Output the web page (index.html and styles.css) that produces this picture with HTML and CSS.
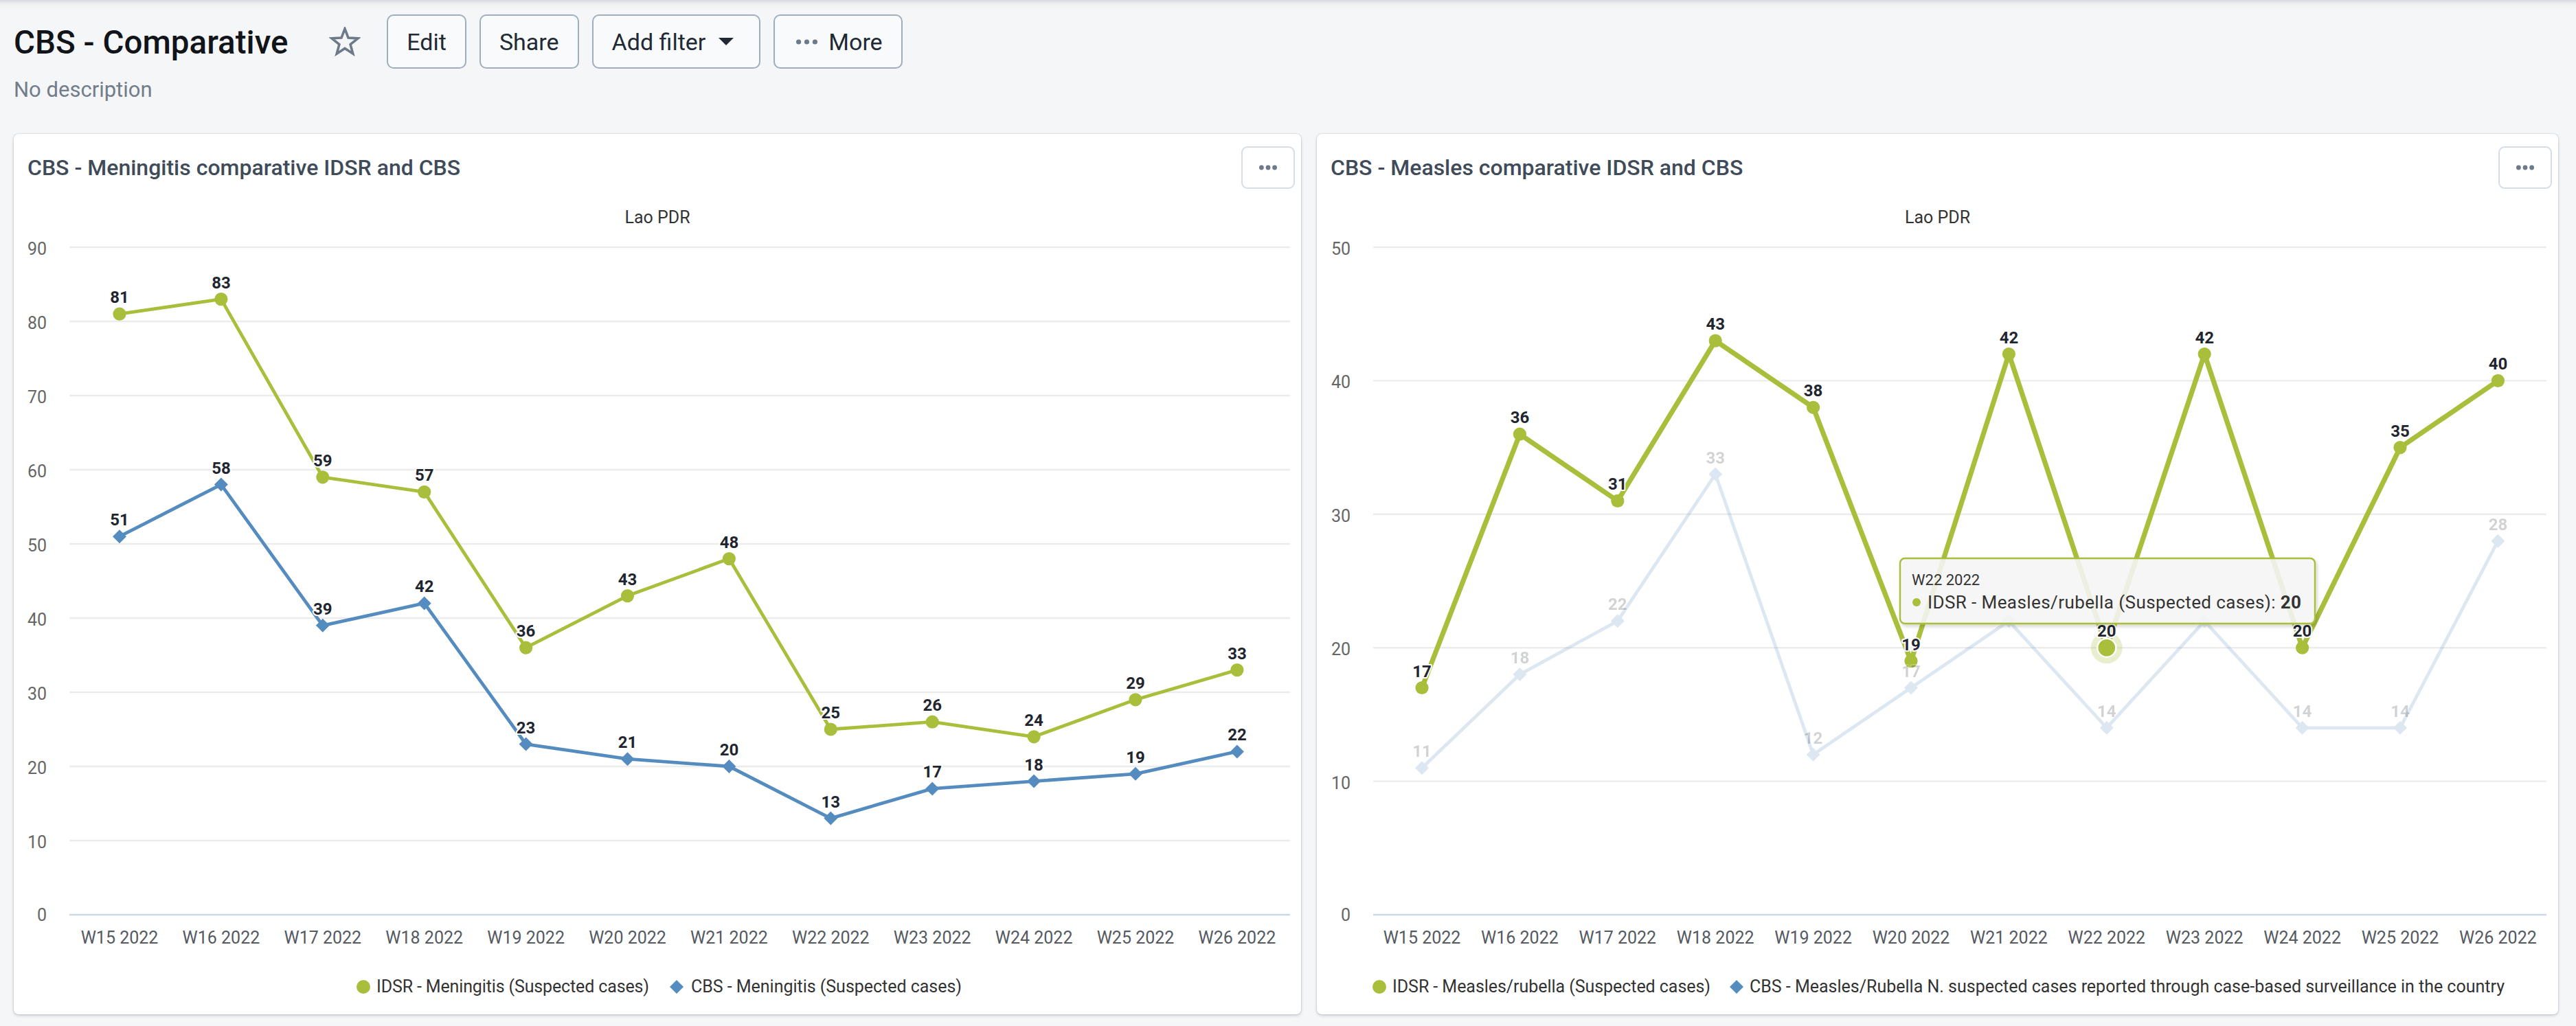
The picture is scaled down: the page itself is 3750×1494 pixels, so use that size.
FILE: index.html
```html
<!DOCTYPE html>
<html lang="en">
<head>
<meta charset="utf-8">
<title>CBS - Comparative</title>
<link rel="stylesheet" href="styles.css">
</head>
<body>
<header class="dash-header">
  <div class="title-row">
    <h1 class="dash-title">CBS - Comparative</h1>
    <svg class="star" width="46" height="44" viewBox="-1 -1 46 44" aria-hidden="true">
      <polygon points="22,2 27,15.12 41.02,15.82 30.08,24.63 33.76,38.18 22,30.5 10.24,38.18 13.92,24.63 2.98,15.82 17,15.12" fill="none" stroke="#6e7a8a" stroke-width="3.6"/>
    </svg>
    <div class="actions">
      <button class="btn">Edit</button>
      <button class="btn">Share</button>
      <button class="btn btn-drop">Add filter
        <svg class="caret" width="22" height="11" viewBox="0 0 22 11"><polygon points="0,0 22,0 11,11" fill="#212934"/></svg>
      </button>
      <button class="btn btn-more">
        <svg class="dots" width="31" height="8" viewBox="0 0 31 8"><circle cx="3.6" cy="4" r="3.6" fill="#6e7a8a"/><circle cx="15.5" cy="4" r="3.6" fill="#6e7a8a"/><circle cx="27.4" cy="4" r="3.6" fill="#6e7a8a"/></svg>
        More
      </button>
    </div>
  </div>
  <p class="desc">No description</p>
</header>

<main class="grid">
  <section class="card card-left">
    <div class="card-head">
      <h2 class="card-title">CBS - Meningitis comparative IDSR and CBS</h2>
      <button class="item-menu" aria-label="More"><svg width="26" height="8" viewBox="0 0 26 8"><circle cx="3.4" cy="4" r="3.4" fill="#6e7a8a"/><circle cx="13" cy="4" r="3.4" fill="#6e7a8a"/><circle cx="22.6" cy="4" r="3.4" fill="#6e7a8a"/></svg></button>
    </div>
    <svg class="chart" width="1874" height="1202" viewBox="20 275 1874 1202">
      <text class="chart-sub" x="957" y="325" text-anchor="middle">Lao PDR</text>
      <g class="grid-lines">
        <line x1="101" y1="360" x2="1878" y2="360"/>
        <line x1="101" y1="468" x2="1878" y2="468"/>
        <line x1="101" y1="576" x2="1878" y2="576"/>
        <line x1="101" y1="684" x2="1878" y2="684"/>
        <line x1="101" y1="792" x2="1878" y2="792"/>
        <line x1="101" y1="900" x2="1878" y2="900"/>
        <line x1="101" y1="1008" x2="1878" y2="1008"/>
        <line x1="101" y1="1116" x2="1878" y2="1116"/>
        <line x1="101" y1="1224" x2="1878" y2="1224"/>
      </g>
      <line class="axis-line" x1="101" y1="1332" x2="1878" y2="1332"/>
      <g class="y-labels" text-anchor="end">
        <text x="68" y="371">90</text>
        <text x="68" y="479">80</text>
        <text x="68" y="587">70</text>
        <text x="68" y="695">60</text>
        <text x="68" y="803">50</text>
        <text x="68" y="911">40</text>
        <text x="68" y="1019">30</text>
        <text x="68" y="1127">20</text>
        <text x="68" y="1235">10</text>
        <text x="68" y="1341">0</text>
      </g>
      <g class="x-labels" text-anchor="middle">
        <text x="174" y="1374">W15 2022</text>
        <text x="321.9" y="1374">W16 2022</text>
        <text x="469.8" y="1374">W17 2022</text>
        <text x="617.7" y="1374">W18 2022</text>
        <text x="765.6" y="1374">W19 2022</text>
        <text x="913.5" y="1374">W20 2022</text>
        <text x="1061.4" y="1374">W21 2022</text>
        <text x="1209.3" y="1374">W22 2022</text>
        <text x="1357.2" y="1374">W23 2022</text>
        <text x="1505.1" y="1374">W24 2022</text>
        <text x="1653" y="1374">W25 2022</text>
        <text x="1800.9" y="1374">W26 2022</text>
      </g>
      <polyline class="line-blue" points="174,781.2 321.9,705.6 469.8,910.8 617.7,878.4 765.6,1083.6 913.5,1105.2 1061.4,1116 1209.3,1191.6 1357.2,1148.4 1505.1,1137.6 1653,1126.8 1800.9,1094.4"/>
      <polyline class="line-green" points="174,457.2 321.9,435.6 469.8,694.8 617.7,716.4 765.6,943.2 913.5,867.6 1061.4,813.6 1209.3,1062 1357.2,1051.2 1505.1,1072.8 1653,1018.8 1800.9,975.6"/>
      <g class="mk-blue">
        <path d="M174 771.2l10 10-10 10-10-10z"/>
        <path d="M321.9 695.6l10 10-10 10-10-10z"/>
        <path d="M469.8 900.8l10 10-10 10-10-10z"/>
        <path d="M617.7 868.4l10 10-10 10-10-10z"/>
        <path d="M765.6 1073.6l10 10-10 10-10-10z"/>
        <path d="M913.5 1095.2l10 10-10 10-10-10z"/>
        <path d="M1061.4 1106l10 10-10 10-10-10z"/>
        <path d="M1209.3 1181.6l10 10-10 10-10-10z"/>
        <path d="M1357.2 1138.4l10 10-10 10-10-10z"/>
        <path d="M1505.1 1127.6l10 10-10 10-10-10z"/>
        <path d="M1653 1116.8l10 10-10 10-10-10z"/>
        <path d="M1800.9 1084.4l10 10-10 10-10-10z"/>
      </g>
      <g class="mk-green">
        <circle cx="174" cy="457.2" r="9.6"/>
        <circle cx="321.9" cy="435.6" r="9.6"/>
        <circle cx="469.8" cy="694.8" r="9.6"/>
        <circle cx="617.7" cy="716.4" r="9.6"/>
        <circle cx="765.6" cy="943.2" r="9.6"/>
        <circle cx="913.5" cy="867.6" r="9.6"/>
        <circle cx="1061.4" cy="813.6" r="9.6"/>
        <circle cx="1209.3" cy="1062" r="9.6"/>
        <circle cx="1357.2" cy="1051.2" r="9.6"/>
        <circle cx="1505.1" cy="1072.8" r="9.6"/>
        <circle cx="1653" cy="1018.8" r="9.6"/>
        <circle cx="1800.9" cy="975.6" r="9.6"/>
      </g>
      <g class="dlabels" text-anchor="middle">
        <text x="174" y="441.2">81</text>
        <text x="321.9" y="419.6">83</text>
        <text x="469.8" y="678.8">59</text>
        <text x="617.7" y="700.4">57</text>
        <text x="765.6" y="927.2">36</text>
        <text x="913.5" y="851.6">43</text>
        <text x="1061.4" y="797.6">48</text>
        <text x="1209.3" y="1046">25</text>
        <text x="1357.2" y="1035.2">26</text>
        <text x="1505.1" y="1056.8">24</text>
        <text x="1653" y="1002.8">29</text>
        <text x="1800.9" y="959.6">33</text>
        <text x="174" y="765.2">51</text>
        <text x="321.9" y="689.6">58</text>
        <text x="469.8" y="894.8">39</text>
        <text x="617.7" y="862.4">42</text>
        <text x="765.6" y="1067.6">23</text>
        <text x="913.5" y="1089.2">21</text>
        <text x="1061.4" y="1100">20</text>
        <text x="1209.3" y="1175.6">13</text>
        <text x="1357.2" y="1132.4">17</text>
        <text x="1505.1" y="1121.6">18</text>
        <text x="1653" y="1110.8">19</text>
        <text x="1800.9" y="1078.4">22</text>
      </g>
      <g class="legend">
        <circle cx="529" cy="1437" r="10" fill="#a9be3b"/>
        <text x="548" y="1445" textLength="397" lengthAdjust="spacing">IDSR - Meningitis (Suspected cases)</text>
        <path d="M985 1427l10 10-10 10-10-10z" fill="#558cc0"/>
        <text x="1006" y="1445" textLength="394" lengthAdjust="spacing">CBS - Meningitis (Suspected cases)</text>
      </g>
    </svg>
  </section>

  <section class="card card-right">
    <div class="card-head">
      <h2 class="card-title">CBS - Measles comparative IDSR and CBS</h2>
      <button class="item-menu" aria-label="More"><svg width="26" height="8" viewBox="0 0 26 8"><circle cx="3.4" cy="4" r="3.4" fill="#6e7a8a"/><circle cx="13" cy="4" r="3.4" fill="#6e7a8a"/><circle cx="22.6" cy="4" r="3.4" fill="#6e7a8a"/></svg></button>
    </div>
    <svg class="chart" width="1807" height="1202" viewBox="1917 275 1807 1202">
      <defs>
        <filter id="tipShadow" x="-5%" y="-20%" width="110%" height="150%">
          <feDropShadow dx="2" dy="3" stdDeviation="2.5" flood-color="#000" flood-opacity="0.18"/>
        </filter>
      </defs>
      <text class="chart-sub" x="2820.5" y="325" text-anchor="middle">Lao PDR</text>
      <g class="grid-lines">
        <line x1="1999" y1="360" x2="3707" y2="360"/>
        <line x1="1999" y1="554.4" x2="3707" y2="554.4"/>
        <line x1="1999" y1="748.8" x2="3707" y2="748.8"/>
        <line x1="1999" y1="943.2" x2="3707" y2="943.2"/>
        <line x1="1999" y1="1137.6" x2="3707" y2="1137.6"/>
      </g>
      <line class="axis-line" x1="1999" y1="1332" x2="3707" y2="1332"/>
      <g class="y-labels" text-anchor="end">
        <text x="1966" y="371">50</text>
        <text x="1966" y="565">40</text>
        <text x="1966" y="760">30</text>
        <text x="1966" y="954">20</text>
        <text x="1966" y="1149">10</text>
        <text x="1966" y="1341">0</text>
      </g>
      <g class="x-labels" text-anchor="middle">
        <text x="2070" y="1374">W15 2022</text>
        <text x="2212.4" y="1374">W16 2022</text>
        <text x="2354.8" y="1374">W17 2022</text>
        <text x="2497.2" y="1374">W18 2022</text>
        <text x="2639.6" y="1374">W19 2022</text>
        <text x="2782" y="1374">W20 2022</text>
        <text x="2924.4" y="1374">W21 2022</text>
        <text x="3066.8" y="1374">W22 2022</text>
        <text x="3209.2" y="1374">W23 2022</text>
        <text x="3351.6" y="1374">W24 2022</text>
        <text x="3494" y="1374">W25 2022</text>
        <text x="3636.4" y="1374">W26 2022</text>
      </g>
      <g class="faded">
        <polyline class="line-blue" points="2070,1118.2 2212.4,982.1 2354.8,904.3 2497.2,690.5 2639.6,1098.7 2782,1001.5 2924.4,904.3 3066.8,1059.8 3209.2,904.3 3351.6,1059.8 3494,1059.8 3636.4,787.7"/>
        <g class="mk-blue">
          <path d="M2070 1108.2l10 10-10 10-10-10z"/>
          <path d="M2212.4 972.1l10 10-10 10-10-10z"/>
          <path d="M2354.8 894.3l10 10-10 10-10-10z"/>
          <path d="M2497.2 680.5l10 10-10 10-10-10z"/>
          <path d="M2639.6 1088.7l10 10-10 10-10-10z"/>
          <path d="M2782 991.5l10 10-10 10-10-10z"/>
          <path d="M2924.4 894.3l10 10-10 10-10-10z"/>
          <path d="M3066.8 1049.8l10 10-10 10-10-10z"/>
          <path d="M3209.2 894.3l10 10-10 10-10-10z"/>
          <path d="M3351.6 1049.8l10 10-10 10-10-10z"/>
          <path d="M3494 1049.8l10 10-10 10-10-10z"/>
          <path d="M3636.4 777.7l10 10-10 10-10-10z"/>
        </g>
      </g>
      <polyline class="line-green line-hover" points="2070,1001.5 2212.4,632.2 2354.8,729.4 2497.2,496.1 2639.6,593.3 2782,962.6 2924.4,515.5 3066.8,943.2 3209.2,515.5 3351.6,943.2 3494,651.6 3636.4,554.4"/>
      <circle class="halo" cx="3066.8" cy="943.2" r="23"/>
      <g class="mk-green">
        <circle cx="2070" cy="1001.5" r="9.6"/>
        <circle cx="2212.4" cy="632.2" r="9.6"/>
        <circle cx="2354.8" cy="729.4" r="9.6"/>
        <circle cx="2497.2" cy="496.1" r="9.6"/>
        <circle cx="2639.6" cy="593.3" r="9.6"/>
        <circle cx="2782" cy="962.6" r="9.6"/>
        <circle cx="2924.4" cy="515.5" r="9.6"/>
        <circle cx="3209.2" cy="515.5" r="9.6"/>
        <circle cx="3351.6" cy="943.2" r="9.6"/>
        <circle cx="3494" cy="651.6" r="9.6"/>
        <circle cx="3636.4" cy="554.4" r="9.6"/>
      </g>
      <circle class="mk-hover" cx="3066.8" cy="943.2" r="13.5"/>
      <g class="dlabels faded" text-anchor="middle">
        <text x="2070" y="1102.2">11</text>
        <text x="2212.4" y="966.1">18</text>
        <text x="2354.8" y="888.3">22</text>
        <text x="2497.2" y="674.5">33</text>
        <text x="2639.6" y="1082.7">12</text>
        <text x="2782" y="985.5">17</text>
        <text x="3066.8" y="1043.8">14</text>
        <text x="3351.6" y="1043.8">14</text>
        <text x="3494" y="1043.8">14</text>
        <text x="3636.4" y="771.7">28</text>
      </g>
      <g class="dlabels" text-anchor="middle">
        <text x="2070" y="985.5">17</text>
        <text x="2212.4" y="616.2">36</text>
        <text x="2354.8" y="713.4">31</text>
        <text x="2497.2" y="480.1">43</text>
        <text x="2639.6" y="577.3">38</text>
        <text x="2782" y="946.6">19</text>
        <text x="2924.4" y="499.5">42</text>
        <text x="3066.8" y="927.2">20</text>
        <text x="3209.2" y="499.5">42</text>
        <text x="3351.6" y="927.2">20</text>
        <text x="3494" y="635.6">35</text>
        <text x="3636.4" y="538.4">40</text>
      </g>
      <g class="legend">
        <circle cx="2008" cy="1437" r="10" fill="#a9be3b"/>
        <text x="2027" y="1445" textLength="463" lengthAdjust="spacing">IDSR - Measles/rubella (Suspected cases)</text>
        <path d="M2528 1427l10 10-10 10-10-10z" fill="#558cc0"/>
        <text x="2547" y="1445" textLength="1099" lengthAdjust="spacing">CBS - Measles/Rubella N. suspected cases reported through case-based surveillance in the country</text>
      </g>
      <g class="tooltip">
        <rect x="2766" y="813" width="604" height="95" rx="7" filter="url(#tipShadow)"/>
        <text class="tip-head" x="2783" y="852">W22 2022</text>
        <circle cx="2790" cy="877" r="6" fill="#a9be3b"/>
        <text class="tip-body" x="2806" y="886" textLength="544" lengthAdjust="spacing">IDSR - Measles/rubella (Suspected cases): <tspan class="tip-val">20</tspan></text>
      </g>
    </svg>
  </section>
</main>
</body>
</html>
```

FILE: styles.css
```css
html, body {
  margin: 0;
  padding: 0;
}

body {
  width: 3750px;
  min-height: 1494px;
  background-color: #f4f6f8;
  background-image: linear-gradient(to bottom, #d8dbdf 0px, #eef0f2 6px, #f4f6f8 14px);
  background-repeat: no-repeat;
  background-size: 100% 14px;
  font-family: "Roboto", "Noto Sans", sans-serif;
  overflow: hidden;
}

.dash-header {
  padding: 21px 0 0 20px;
}

.title-row {
  display: flex;
  align-items: center;
  height: 79px;
}

.dash-title {
  margin: 0 60px 0 0;
  padding-top: 5px;
  font-size: 47.5px;
  font-weight: 500;
  line-height: 73px;
  color: #111418;
  align-self: flex-start;
  white-space: nowrap;
}

.star {
  display: block;
  margin-right: 38px;
}

.actions {
  display: flex;
  gap: 19px;
  height: 79px;
}

.btn {
  display: flex;
  align-items: center;
  height: 79px;
  box-sizing: border-box;
  padding: 0 27px;
  border: 2px solid #a0adba;
  border-radius: 10px;
  background: #f9fafb;
  color: #212934;
  font-family: "Roboto", sans-serif;
  font-size: 34px;
  font-weight: 400;
  line-height: 1;
  cursor: pointer;
}

.btn-drop {
  padding-right: 37px;
}

.caret {
  margin-left: 19px;
  display: block;
}

.btn-more {
  padding-left: 31px;
}

.dots {
  display: block;
  margin-right: 16px;
}

.desc {
  margin: 11px 0 0 0;
  font-size: 31px;
  line-height: 40px;
  color: #737d8a;
}

.grid {
  display: grid;
  grid-template-columns: 1874px 1807px;
  column-gap: 23px;
  margin: 44px 0 0 20px;
}

.card {
  height: 1282px;
  background: #ffffff;
  border-radius: 7px;
  box-shadow: 0 0 2px rgba(33, 41, 52, 0.25), 0 2px 4px rgba(33, 41, 52, 0.18);
  display: flex;
  flex-direction: column;
  overflow: hidden;
}

.card-head {
  display: flex;
  align-items: center;
  justify-content: space-between;
  height: 62px;
  padding: 18px 9px 0 20px;
}

.card-title {
  margin: 0;
  font-size: 32px;
  font-weight: 500;
  color: #404b5a;
  white-space: nowrap;
}

.item-menu {
  width: 78px;
  height: 62px;
  box-sizing: border-box;
  border: 2px solid #d5dde5;
  border-radius: 9px;
  background: #ffffff;
  display: flex;
  align-items: center;
  justify-content: center;
  padding: 0;
  cursor: pointer;
}

.chart {
  display: block;
}

.chart text {
  font-family: "Roboto", sans-serif;
}

.chart-sub {
  font-size: 25px;
  fill: #333333;
}

.grid-lines line {
  stroke: #ececec;
  stroke-width: 2.4;
}

.axis-line {
  stroke: #ccd6eb;
  stroke-width: 2.6;
}

.y-labels text {
  font-size: 25px;
  fill: #666666;
}

.x-labels text {
  font-size: 25px;
  fill: #555a62;
}

.line-green {
  fill: none;
  stroke: #a9be3b;
  stroke-width: 4.8;
  stroke-linejoin: round;
  stroke-linecap: round;
}

.line-hover {
  stroke-width: 7.2;
}

.line-blue {
  fill: none;
  stroke: #558cc0;
  stroke-width: 4.8;
  stroke-linejoin: round;
  stroke-linecap: round;
}

.mk-green circle {
  fill: #a9be3b;
}

.mk-blue path {
  fill: #558cc0;
}

.faded {
  opacity: 0.2;
}

.halo {
  fill: #a9be3b;
  opacity: 0.25;
}

.mk-hover {
  fill: #a9be3b;
  stroke: #ffffff;
  stroke-width: 2.4;
}

.dlabels text {
  font-size: 24px;
  font-weight: 700;
  fill: #1f2630;
  stroke: #ffffff;
  stroke-width: 4px;
  stroke-linejoin: round;
  paint-order: stroke;
}

.legend text {
  font-size: 25px;
  fill: #333333;
}

.tooltip rect {
  fill: rgba(247, 247, 247, 0.88);
  stroke: #a9be3b;
  stroke-width: 2.4;
}

.tip-head {
  font-size: 22px;
  fill: #333333;
}

.tip-body {
  font-size: 26px;
  fill: #333333;
}

.tip-val {
  font-weight: 700;
}
```
